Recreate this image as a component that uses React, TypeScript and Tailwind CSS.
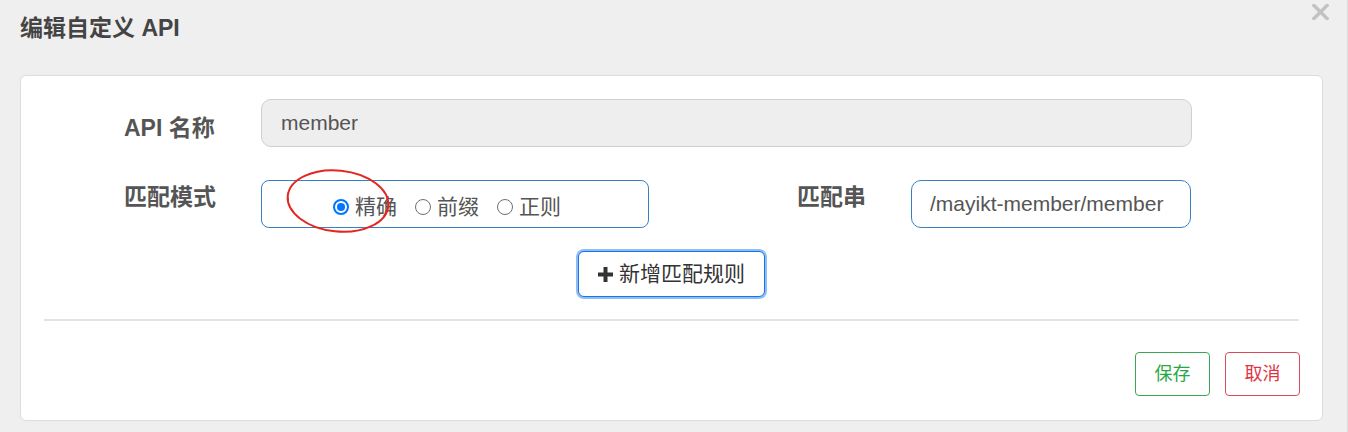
import React from "react";

const font = { fontFamily: '"Liberation Sans", Arial, "Noto Sans CJK SC", sans-serif' };

function Radio({ checked, label }: { checked?: boolean; label: string }) {
  return (
    <label className="flex items-center gap-[6px]">
      {checked ? (
        <span className="w-[16px] h-[16px] rounded-full border-[2px] border-[#0075ff] flex items-center justify-center bg-white">
          <span className="w-[8px] h-[8px] rounded-full bg-[#0075ff]" />
        </span>
      ) : (
        <span className="w-[16px] h-[16px] rounded-full border border-[#6f6f6f] bg-white" />
      )}
      <span className="text-[21px] leading-[24px] text-[#555]">{label}</span>
    </label>
  );
}

export default function App() {
  return (
    <div
      className="relative w-[1348px] h-[432px] bg-[#efefef] overflow-hidden border-r border-[#dcdcdc]"
      style={font}
    >
      <div className="h-[75px] pl-[20px] pt-[14px]">
        <div className="text-[23px] leading-[28px] font-bold text-[#444]">编辑自定义 API</div>
      </div>
      <svg className="absolute left-[1312px] top-[4px]" width="17" height="16" viewBox="0 0 17 16">
        <path d="M2 1.5 L15 14.5 M15 1.5 L2 14.5" stroke="#c2c2c2" strokeWidth="3.4" strokeLinecap="square" />
      </svg>

      <div className="ml-[20px] w-[1303px] h-[346px] bg-white border border-[#dcdcdc] rounded-[6px] flex flex-col">
        <div className="flex items-start pt-[23px] pl-[103px]">
          <div className="w-[137px] pt-[17px] text-[23px] leading-[24px] font-bold text-[#555]">API 名称</div>
          <div className="w-[931px] h-[48px] rounded-[10px] border border-[#cfcfcf] bg-[#eeeeee] flex items-center pl-[19px] text-[21px] text-[#555]">
            member
          </div>
        </div>

        <div className="flex items-start pt-[33px] pl-[103px]">
          <div className="w-[137px] pt-[5px] text-[23px] leading-[24px] font-bold text-[#555]">匹配模式</div>
          <div className="w-[388px] h-[48px] rounded-[8px] border border-[#3a7fc4] flex items-center pl-[71px] pt-[5px] gap-[18px]">
            <Radio checked label="精确" />
            <Radio label="前缀" />
            <Radio label="正则" />
          </div>
          <div className="ml-[148px] w-[114px] pt-[5px] text-[23px] leading-[24px] font-bold text-[#555]">匹配串</div>
          <div className="w-[280px] h-[48px] rounded-[10px] border border-[#3a7fc4] flex items-center pl-[18px] text-[21px] text-[#555]">
            /mayikt-member/member
          </div>
        </div>

        <div className="flex justify-center pt-[23px]">
          <button className="w-[187px] h-[46px] rounded-[6px] border border-[#1a73e8] ring-2 ring-[#8dbdf5] bg-white flex items-center justify-center gap-[6px] text-[21px] text-[#333]">
            <svg width="15" height="15" viewBox="0 0 15 15">
              <rect x="5.5" y="0" width="4" height="15" fill="#333" />
              <rect x="0" y="5.5" width="15" height="4" fill="#333" />
            </svg>
            新增匹配规则
          </button>
        </div>

        <div className="mx-[23px] mt-[22px] h-[2px] bg-[#e3e3e3]" />

        <div className="flex justify-end gap-[15px] mr-[22px] mt-[31px]">
          <button className="w-[75px] h-[44px] rounded-[4px] border border-[#3aa655] text-[#28a745] text-[18px] bg-white">保存</button>
          <button className="w-[75px] h-[44px] rounded-[4px] border border-[#dc4a5a] text-[#dc3545] text-[18px] bg-white">取消</button>
        </div>
      </div>

      <svg className="absolute left-[284px] top-[167px] pointer-events-none" width="108" height="68" viewBox="0 0 108 68">
        <ellipse cx="54" cy="34" rx="50.5" ry="30.5" transform="rotate(6 54 34)" fill="none" stroke="#e52620" strokeWidth="2" />
      </svg>
    </div>
  );
}
